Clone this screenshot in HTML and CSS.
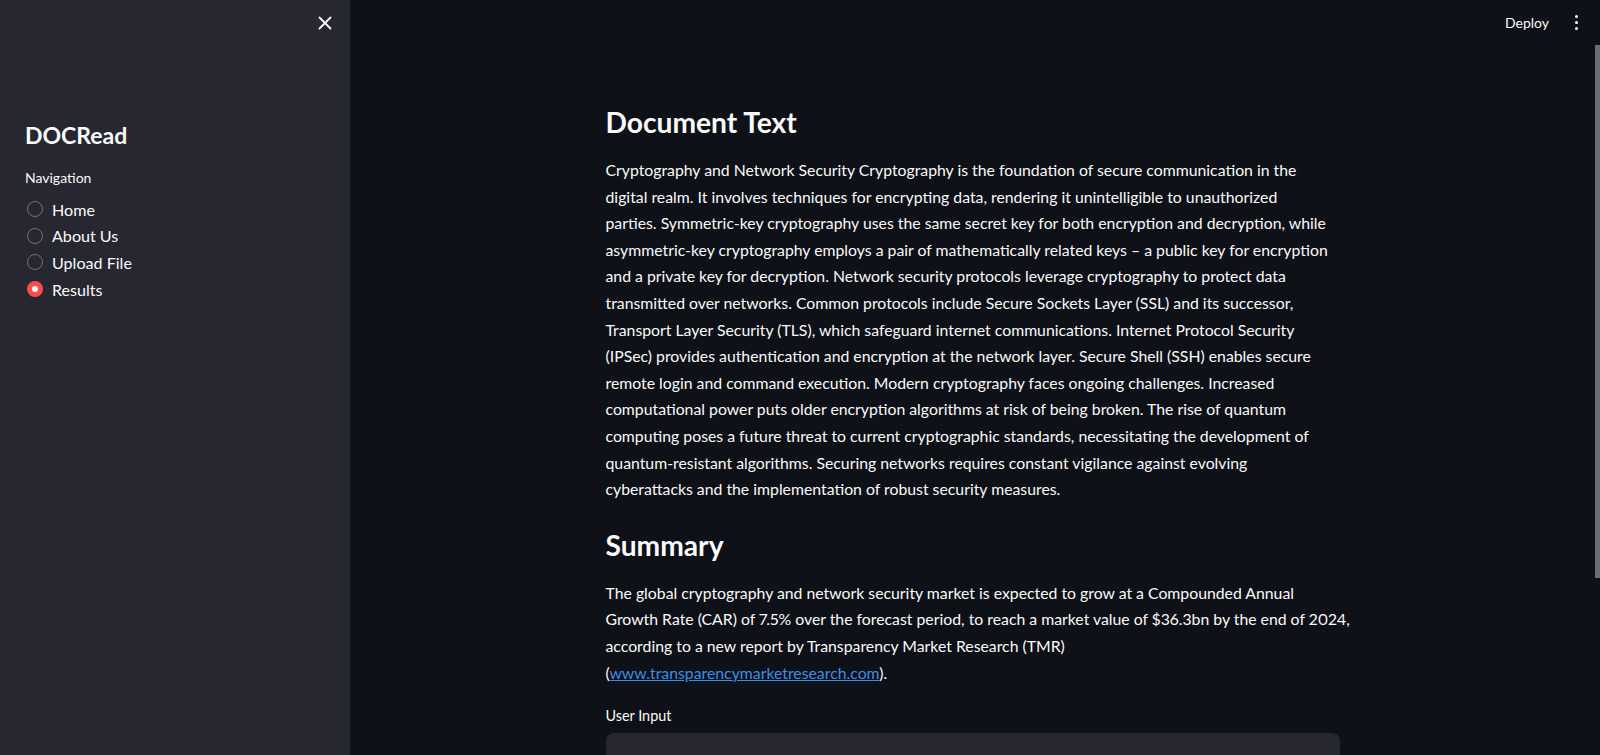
FILE: index.html
```html
<!DOCTYPE html>
<html lang="en">
<head>
<meta charset="utf-8">
<title>DOCRead</title>
<link rel="stylesheet" href="styles.css">
</head>
<body>
<div class="app">
  <aside class="sidebar">
    <div class="sidebar-top">
      <button class="close-btn" aria-label="Close sidebar">
        <svg width="14" height="14" viewBox="0 0 14 14"><path d="M1.5 1.5 L12.5 12.5 M12.5 1.5 L1.5 12.5" stroke="#fafafa" stroke-width="1.8" stroke-linecap="round"/></svg>
      </button>
    </div>
    <div class="sidebar-content">
      <h1 class="app-title">DOCRead</h1>
      <div class="nav-label">Navigation</div>
      <ul class="radio-list">
        <li class="radio-item"><span class="radio"></span><span>Home</span></li>
        <li class="radio-item"><span class="radio"></span><span>About Us</span></li>
        <li class="radio-item"><span class="radio"></span><span>Upload File</span></li>
        <li class="radio-item"><span class="radio checked"></span><span>Results</span></li>
      </ul>
    </div>
  </aside>
  <div class="main">
    <div class="scroll-area">
      <header class="topbar">
        <span class="deploy">Deploy</span>
        <span class="kebab"><i></i><i></i><i></i></span>
      </header>
      <section class="block">
        <h2 class="heading">Document Text</h2>
        <p class="para">Cryptography and Network Security Cryptography is the foundation of secure communication in the<br>
digital realm. It involves techniques for encrypting data, rendering it unintelligible to unauthorized<br>
parties. Symmetric-key cryptography uses the same secret key for both encryption and decryption, while<br>
asymmetric-key cryptography employs a pair of mathematically related keys – a public key for encryption<br>
and a private key for decryption. Network security protocols leverage cryptography to protect data<br>
transmitted over networks. Common protocols include Secure Sockets Layer (SSL) and its successor,<br>
Transport Layer Security (TLS), which safeguard internet communications. Internet Protocol Security<br>
(IPSec) provides authentication and encryption at the network layer. Secure Shell (SSH) enables secure<br>
remote login and command execution. Modern cryptography faces ongoing challenges. Increased<br>
computational power puts older encryption algorithms at risk of being broken. The rise of quantum<br>
computing poses a future threat to current cryptographic standards, necessitating the development of<br>
quantum-resistant algorithms. Securing networks requires constant vigilance against evolving<br>
cyberattacks and the implementation of robust security measures.</p>
        <h2 class="heading heading-2">Summary</h2>
        <p class="para">The global cryptography and network security market is expected to grow at a Compounded Annual<br>
Growth Rate (CAR) of 7.5% over the forecast period, to reach a market value of $36.3bn by the end of 2024,<br>
according to a new report by Transparency Market Research (TMR)<br>
(<a href="#">www.transparencymarketresearch.com</a>).</p>
        <label class="input-label">User Input</label>
        <div class="textarea"></div>
      </section>
    </div>
    <div class="scrollbar"><div class="thumb"></div></div>
  </div>
</div>
</body>
</html>
```

FILE: styles.css
```css
html, body {
  margin: 0;
  padding: 0;
  height: 100%;
  overflow: hidden;
}
body {
  font-family: Lato, "Open Sans", sans-serif;
  color: #fafafa;
  background: #0e1117;
}
.app {
  display: flex;
  height: 100vh;
}
.sidebar {
  width: 350px;
  flex: none;
  background: #262730;
  display: flex;
  flex-direction: column;
}
.sidebar-top {
  height: 46px;
  flex: none;
  display: flex;
  justify-content: flex-end;
  align-items: center;
  padding-right: 17px;
}
.close-btn {
  background: none;
  border: 0;
  padding: 0;
  width: 16px;
  height: 16px;
  display: flex;
  align-items: center;
  justify-content: center;
}
.sidebar-content {
  padding: 0 26px 0 25px;
}
.app-title {
  margin: 74px 0 0;
  font-size: 23px;
  font-weight: 700;
  line-height: 30px;
}
.nav-label {
  margin-top: 19px;
  font-size: 14px;
  line-height: 18px;
}
.radio-list {
  list-style: none;
  margin: 9px 0 0;
  padding: 0;
}
.radio-item {
  display: flex;
  align-items: center;
  gap: 9px;
  height: 26.6px;
  font-size: 16.1px;
  padding-left: 2px;
}
.radio {
  width: 16px;
  height: 16px;
  box-sizing: border-box;
  border: 1.6px solid #70727b;
  border-radius: 50%;
  flex: none;
}
.radio.checked {
  border: 5px solid #ff4b4b;
  background: #fafafa;
}
.main {
  flex: 1;
  display: flex;
  min-width: 0;
}
.scroll-area {
  flex: 1;
  display: flex;
  flex-direction: column;
  align-items: center;
}
.topbar {
  flex: none;
  align-self: stretch;
  height: 45px;
  display: flex;
  align-items: center;
  justify-content: flex-end;
  gap: 26px;
  padding-right: 17px;
}
.deploy {
  font-size: 14px;
}
.kebab {
  display: flex;
  flex-direction: column;
  gap: 3px;
}
.kebab i {
  width: 3px;
  height: 3px;
  border-radius: 50%;
  background: #fafafa;
}
.block {
  flex: none;
  width: 734px;
}
.heading {
  margin: 57px 0 0;
  font-size: 28.2px;
  font-weight: 700;
  line-height: 40px;
}
.heading-2 {
  margin-top: 22px;
}
.para {
  margin: 15px 0 0;
  font-size: 15.8px;
  line-height: 26.6px;
  white-space: nowrap;
  font-variant-numeric: proportional-nums;
}
.para a {
  color: #3b8eea;
}
.input-label {
  display: block;
  margin-top: 20px;
  font-size: 14.4px;
  line-height: 20px;
}
.textarea {
  margin-top: 7px;
  height: 120px;
  background: #262730;
  border-radius: 8px;
}
.scrollbar {
  width: 5px;
  flex: none;
}
.thumb {
  margin-top: 45px;
  height: 533px;
  background: #6e6e72;
}
```
